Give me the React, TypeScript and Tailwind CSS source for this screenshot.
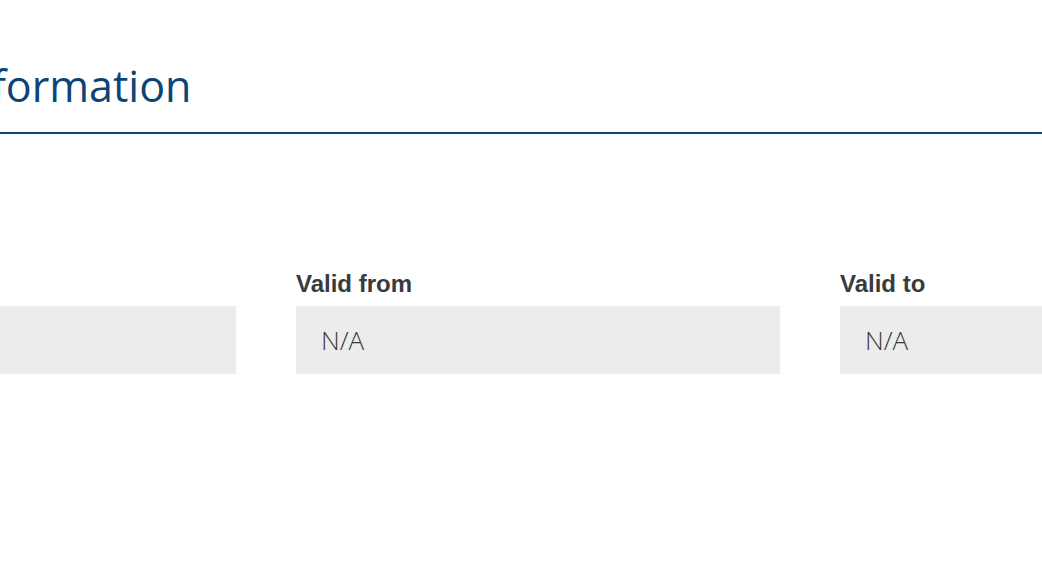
import React from 'react';

const Field = ({ label, value }: { label: string; value: string }) => (
  <div className="flex flex-col w-[484px] shrink-0">
    <span className="font-['Liberation_Sans',Arial,sans-serif] font-bold text-[24px] leading-[28px] text-[#3a3a3c] mb-[8px]">
      {label}
    </span>
    <div className="h-[68px] bg-[#ececec] flex items-center px-[25px] font-['Open_Sans',sans-serif] text-[26px] text-[#3a3a3a] font-light">
      {value}
    </div>
  </div>
);

export default function App() {
  return (
    <div className="w-[1042px] h-[561px] overflow-hidden bg-white">
      <div className="border-b-2 border-[#0b4677] pt-[54px] pb-[14px]">
        <h1 className="ml-[-47px] font-['Open_Sans',sans-serif] text-[43px] leading-[64px] text-[#0d4476] whitespace-nowrap">
          Information
        </h1>
      </div>
      <div className="ml-[-248px] flex gap-[60px] pt-[136px]">
        <Field label="Certificate number" value="" />
        <Field label="Valid from" value="N/A" />
        <Field label="Valid to" value="N/A" />
      </div>
    </div>
  );
}
